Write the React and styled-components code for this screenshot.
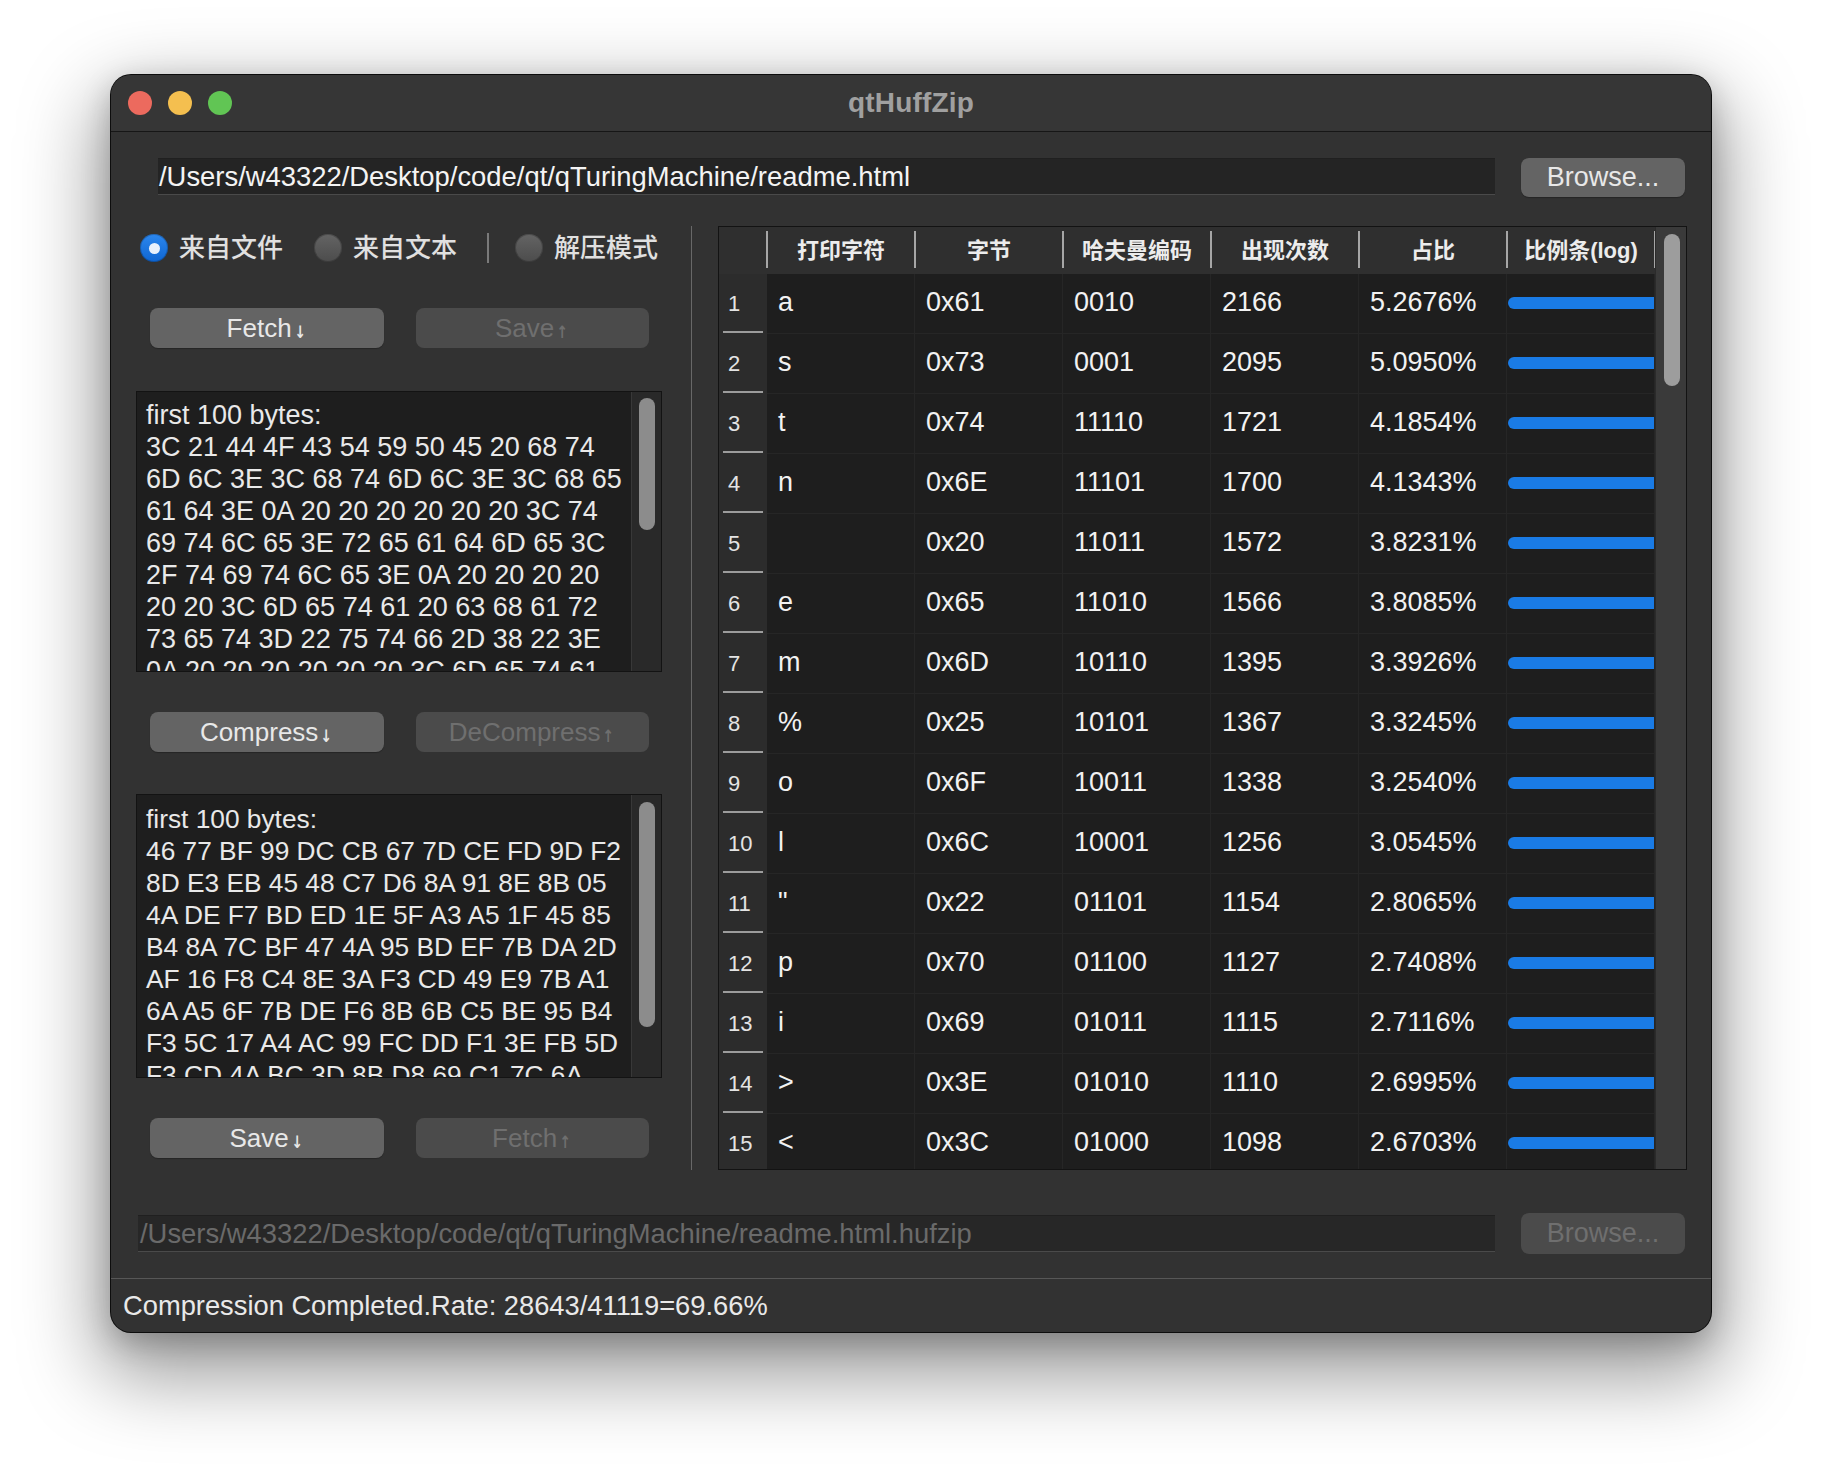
import React from "react";
import styled, { createGlobalStyle } from "styled-components";

const FONT = `"Liberation Sans", "Noto Sans CJK SC", Arial, sans-serif`;

const GlobalStyle = createGlobalStyle`
  html, body { margin: 0; padding: 0; background: #ffffff; }
  body { font-family: ${FONT}; }
  * { box-sizing: border-box; }
`;

const Page = styled.div`
  width: 1824px;
  height: 1480px;
  padding: 75px 0 0 111px;
  background: #ffffff;
  overflow: hidden;
`;

const Window = styled.div`
  width: 1600px;
  height: 1257px;
  border-radius: 20px;
  overflow: hidden;
  background: #323232;
  display: flex;
  flex-direction: column;
  box-shadow: 0 0 0 1px #0d0d0d, 0 32px 80px 12px rgba(0, 0, 0, 0.4),
    0 10px 30px rgba(0, 0, 0, 0.22);
`;

const TitleBar = styled.div`
  height: 57px;
  flex: none;
  display: grid;
  grid-template-columns: 1fr auto 1fr;
  align-items: center;
  background: #363636;
  border-bottom: 1px solid #161616;
`;

const Lights = styled.div`
  display: flex;
  gap: 16px;
  padding-left: 17px;
`;

const Light = styled.span`
  width: 24px;
  height: 24px;
  border-radius: 50%;
  background: ${(p) => p.$c};
`;

const Title = styled.div`
  font-weight: 700;
  font-size: 28px;
  color: #a0a0a0;
  letter-spacing: 0.2px;
`;

const Content = styled.div`
  flex: 1;
  display: flex;
  flex-direction: column;
  padding: 26px 24px 24px 25px;
`;

const PathRow = styled.div`
  display: flex;
  gap: 26px;
  align-items: ${(p) => (p.$top ? "flex-start" : "center")};
  height: ${(p) => p.$h}px;
  margin-top: ${(p) => p.$mt || 0}px;
  padding: 0 2px 0 ${(p) => p.$pl}px;
  flex: none;
`;

const PathInput = styled.div`
  flex: 1;
  height: 37px;
  display: flex;
  align-items: center;
  padding-left: ${(p) => p.$pl}px;
  background: ${(p) => (p.$dim ? "#272727" : "#242424")};
  border-top: 1px solid #202020;
  border-bottom: 1px solid #4a4a4a;
  font-size: 27.4px;
  color: ${(p) => (p.$dim ? "#6a6a6a" : "#f4f4f4")};
  white-space: nowrap;
  overflow: hidden;
`;

const Button = styled.button`
  border: 0;
  border-radius: 8px;
  padding: 0;
  margin: 0;
  font-family: ${FONT};
  font-size: ${(p) => p.$fs || 26}px;
  background: #646464;
  color: #e8e8e8;
  box-shadow: 0 1px 1px rgba(0, 0, 0, 0.25);
  display: flex;
  align-items: center;
  justify-content: center;
  cursor: default;
  &:disabled {
    background: #4b4b4b;
    color: #6f6f6f;
    box-shadow: none;
  }
`;

const BrowseButton = styled(Button)`
  width: 164px;
  flex: none;
  height: ${(p) => p.$h}px;
`;

const Arrow = styled.span`
  font-family: "DejaVu Sans", sans-serif;
  font-size: 17px;
  font-weight: 700;
  margin-left: 1px;
  position: relative;
  top: 4px;
  display: inline-block;
  transform: scaleX(0.8);
`;

const Main = styled.div`
  display: flex;
  height: 944px;
  margin-top: 29px;
  flex: none;
`;

const LeftPanel = styled.div`
  width: 526px;
  flex: none;
  display: flex;
  flex-direction: column;
`;

const RadioRow = styled.div`
  height: 44px;
  display: flex;
  align-items: center;
  padding-left: 4px;
`;

const RadioItem = styled.div`
  display: flex;
  align-items: center;
  gap: 11px;
  margin-left: ${(p) => p.$ml || 0}px;
`;

const RadioCircle = styled.span`
  width: 28px;
  height: 28px;
  border-radius: 50%;
  flex: none;
  display: flex;
  align-items: center;
  justify-content: center;
  background: ${(p) =>
    p.$on
      ? "linear-gradient(#2c87ee, #0f66d2)"
      : "linear-gradient(#646464, #4c4c4c)"};
  box-shadow: inset 0 0 0 1px rgba(0, 0, 0, 0.22);
  &::before {
    content: "";
    display: ${(p) => (p.$on ? "block" : "none")};
    width: 11px;
    height: 11px;
    border-radius: 50%;
    background: #e9f1fc;
  }
`;

const RadioLabel = styled.span`
  font-size: 26px;
  color: #e0e0e0;
  line-height: 1;
  font-weight: 500;
`;

const RadioSep = styled.span`
  width: 2px;
  height: 30px;
  background: #7a7a7a;
  margin-left: 30px;
`;

const ButtonRow = styled.div`
  display: flex;
  gap: 32px;
  height: 40px;
  padding: 0 13px 0 14px;
  margin-top: ${(p) => p.$mt}px;
  flex: none;
  & > button {
    flex: 1;
    height: 100%;
  }
`;

const HexBox = styled.div`
  display: flex;
  height: ${(p) => p.$h}px;
  margin-top: ${(p) => p.$mt}px;
  border: 1px solid #131313;
  background: #1e1e1e;
  flex: none;
`;

const HexText = styled.div`
  flex: 1;
  padding: ${(p) => p.$pt}px 0 0 9px;
  font-size: ${(p) => p.$fs}px;
  line-height: 32px;
  white-space: pre;
  color: #e9e9e9;
  overflow: hidden;
`;

const BoxTrack = styled.div`
  width: 30px;
  flex: none;
  background: #292929;
  border-left: 1px solid #383838;
  padding: ${(p) => p.$pt}px 5px 0 7px;
`;

const Thumb = styled.div`
  width: 16px;
  height: ${(p) => p.$h}px;
  border-radius: 8px;
  background: ${(p) => p.$c || "#8c8c8c"};
`;

const Divider = styled.div`
  width: 1px;
  margin-left: 29px;
  background: #686868;
  flex: none;
`;

const TableFrame = styled.div`
  width: 969px;
  margin-left: 26px;
  flex: none;
  display: flex;
  border: 1px solid #131313;
  background: #1e1e1e;
  overflow: hidden;
`;

const TableBody = styled.div`
  width: 936px;
  flex: none;
  display: flex;
  flex-direction: column;
  overflow: hidden;
`;

const HeaderRow = styled.div`
  display: grid;
  grid-template-columns: 48px repeat(6, 148px);
  height: 47px;
  flex: none;
  background: #2f2f2f;
`;

const HeaderCell = styled.div`
  position: relative;
  display: flex;
  align-items: center;
  justify-content: center;
  padding-bottom: 6px;
  font-size: 22px;
  font-weight: 700;
  color: #ececec;
  white-space: nowrap;
  &::after {
    content: "";
    position: absolute;
    right: -1px;
    top: 4px;
    bottom: 6px;
    width: 2px;
    background: #a6a6a6;
  }
`;

const DataRow = styled.div`
  display: grid;
  grid-template-columns: 48px repeat(6, 148px);
  height: 60px;
  flex: none;
`;

const RowHead = styled.div`
  position: relative;
  display: flex;
  align-items: center;
  padding-left: 9px;
  background: #2c2c2c;
  font-size: 22px;
  color: #e4e4e4;
  &::after {
    content: "";
    position: absolute;
    left: 4px;
    right: 4px;
    bottom: 1px;
    height: 2px;
    background: #9c9c9c;
  }
`;

const Cell = styled.div`
  display: flex;
  align-items: center;
  padding-left: ${(p) => (p.$bar ? 1 : 11)}px;
  padding-bottom: 2px;
  font-size: 27px;
  color: #f2f2f2;
  border-right: 1px solid #262626;
  border-bottom: 1px solid #262626;
  white-space: pre;
  overflow: hidden;
`;

const Bar = styled.div`
  height: 12px;
  border-radius: 6px;
  background: #1a7be5;
  flex: none;
`;

const TableTrack = styled.div`
  width: 31px;
  flex: none;
  background: #3a3a3a;
  border-left: 1px solid #2b2b2b;
  padding: 7px 0 0 8px;
`;

const StatusBar = styled.div`
  height: 54px;
  flex: none;
  border-top: 1px solid #575757;
  padding-left: 12px;
  display: flex;
  align-items: center;
  font-size: 27.3px;
  color: #e9e9e9;
`;

const HEX1 = [
  "first 100 bytes:",
  "3C 21 44 4F 43 54 59 50 45 20 68 74",
  "6D 6C 3E 3C 68 74 6D 6C 3E 3C 68 65",
  "61 64 3E 0A 20 20 20 20 20 20 3C 74",
  "69 74 6C 65 3E 72 65 61 64 6D 65 3C",
  "2F 74 69 74 6C 65 3E 0A 20 20 20 20",
  "20 20 3C 6D 65 74 61 20 63 68 61 72",
  "73 65 74 3D 22 75 74 66 2D 38 22 3E",
  "0A 20 20 20 20 20 20 3C 6D 65 74 61",
].join("\n");

const HEX2 = [
  "first 100 bytes:",
  "46 77 BF 99 DC CB 67 7D CE FD 9D F2",
  "8D E3 EB 45 48 C7 D6 8A 91 8E 8B 05",
  "4A DE F7 BD ED 1E 5F A3 A5 1F 45 85",
  "B4 8A 7C BF 47 4A 95 BD EF 7B DA 2D",
  "AF 16 F8 C4 8E 3A F3 CD 49 E9 7B A1",
  "6A A5 6F 7B DE F6 8B 6B C5 BE 95 B4",
  "F3 5C 17 A4 AC 99 FC DD F1 3E FB 5D",
  "F3 CD 4A BC 3D 8B D8 69 C1 7C 6A",
].join("\n");

const ROWS = [
  ["a", "0x61", "0010", 2166, "5.2676%"],
  ["s", "0x73", "0001", 2095, "5.0950%"],
  ["t", "0x74", "11110", 1721, "4.1854%"],
  ["n", "0x6E", "11101", 1700, "4.1343%"],
  [" ", "0x20", "11011", 1572, "3.8231%"],
  ["e", "0x65", "11010", 1566, "3.8085%"],
  ["m", "0x6D", "10110", 1395, "3.3926%"],
  ["%", "0x25", "10101", 1367, "3.3245%"],
  ["o", "0x6F", "10011", 1338, "3.2540%"],
  ["l", "0x6C", "10001", 1256, "3.0545%"],
  ['"', "0x22", "01101", 1154, "2.8065%"],
  ["p", "0x70", "01100", 1127, "2.7408%"],
  ["i", "0x69", "01011", 1115, "2.7116%"],
  [">", "0x3E", "01010", 1110, "2.6995%"],
  ["<", "0x3C", "01000", 1098, "2.6703%"],
];

const HEADERS = ["打印字符", "字节", "哈夫曼编码", "出现次数", "占比", "比例条(log)"];

const MAX = Math.log(2166);

export default function App() {
  return (
    <Page>
      <GlobalStyle />
      <Window>
        <TitleBar>
          <Lights>
            <Light $c="#ec6a5e" />
            <Light $c="#f4bf4f" />
            <Light $c="#61c554" />
          </Lights>
          <Title>qtHuffZip</Title>
          <div />
        </TitleBar>
        <Content>
          <PathRow $top $h={39} $pl={22}>
            <PathInput $pl={1}>
              /Users/w43322/Desktop/code/qt/qTuringMachine/readme.html
            </PathInput>
            <BrowseButton $h={39} $fs={27}>
              Browse...
            </BrowseButton>
          </PathRow>

          <Main>
            <LeftPanel>
              <RadioRow>
                <RadioItem>
                  <RadioCircle $on />
                  <RadioLabel>来自文件</RadioLabel>
                </RadioItem>
                <RadioItem $ml={31}>
                  <RadioCircle />
                  <RadioLabel>来自文本</RadioLabel>
                </RadioItem>
                <RadioSep />
                <RadioItem $ml={26}>
                  <RadioCircle />
                  <RadioLabel>解压模式</RadioLabel>
                </RadioItem>
              </RadioRow>

              <ButtonRow $mt={38}>
                <Button>
                  Fetch<Arrow>↓</Arrow>
                </Button>
                <Button disabled>
                  Save<Arrow>↑</Arrow>
                </Button>
              </ButtonRow>

              <HexBox $h={281} $mt={43}>
                <HexText $pt={7} $fs={27}>{HEX1}</HexText>
                <BoxTrack $pt={6}>
                  <Thumb $h={132} />
                </BoxTrack>
              </HexBox>

              <ButtonRow $mt={40}>
                <Button>
                  Compress<Arrow>↓</Arrow>
                </Button>
                <Button disabled>
                  DeCompress<Arrow>↑</Arrow>
                </Button>
              </ButtonRow>

              <HexBox $h={284} $mt={42}>
                <HexText $pt={8} $fs={26.3}>{HEX2}</HexText>
                <BoxTrack $pt={7}>
                  <Thumb $h={225} />
                </BoxTrack>
              </HexBox>

              <ButtonRow $mt={40}>
                <Button>
                  Save<Arrow>↓</Arrow>
                </Button>
                <Button disabled>
                  Fetch<Arrow>↑</Arrow>
                </Button>
              </ButtonRow>
            </LeftPanel>

            <Divider />

            <TableFrame>
              <TableBody>
                <HeaderRow>
                  <HeaderCell />
                  {HEADERS.map((h) => (
                    <HeaderCell key={h}>{h}</HeaderCell>
                  ))}
                </HeaderRow>
                {ROWS.map(([ch, byte, code, count, pct], i) => (
                  <DataRow key={byte}>
                    <RowHead>{i + 1}</RowHead>
                    <Cell>{ch}</Cell>
                    <Cell>{byte}</Cell>
                    <Cell>{code}</Cell>
                    <Cell>{count}</Cell>
                    <Cell>{pct}</Cell>
                    <Cell $bar>
                      <Bar
                        style={{
                          width: `${Math.round((Math.log(count) / MAX) * 240)}px`,
                        }}
                      />
                    </Cell>
                  </DataRow>
                ))}
              </TableBody>
              <TableTrack>
                <Thumb $h={152} $c="#9d9d9d" />
              </TableTrack>
            </TableFrame>
          </Main>

          <PathRow $h={41} $mt={43} $pl={2}>
            <PathInput $pl={2} $dim>
              /Users/w43322/Desktop/code/qt/qTuringMachine/readme.html.hufzip
            </PathInput>
            <BrowseButton $h={41} $fs={27} disabled>
              Browse...
            </BrowseButton>
          </PathRow>
        </Content>
        <StatusBar>Compression Completed.Rate: 28643/41119=69.66%</StatusBar>
      </Window>
    </Page>
  );
}
